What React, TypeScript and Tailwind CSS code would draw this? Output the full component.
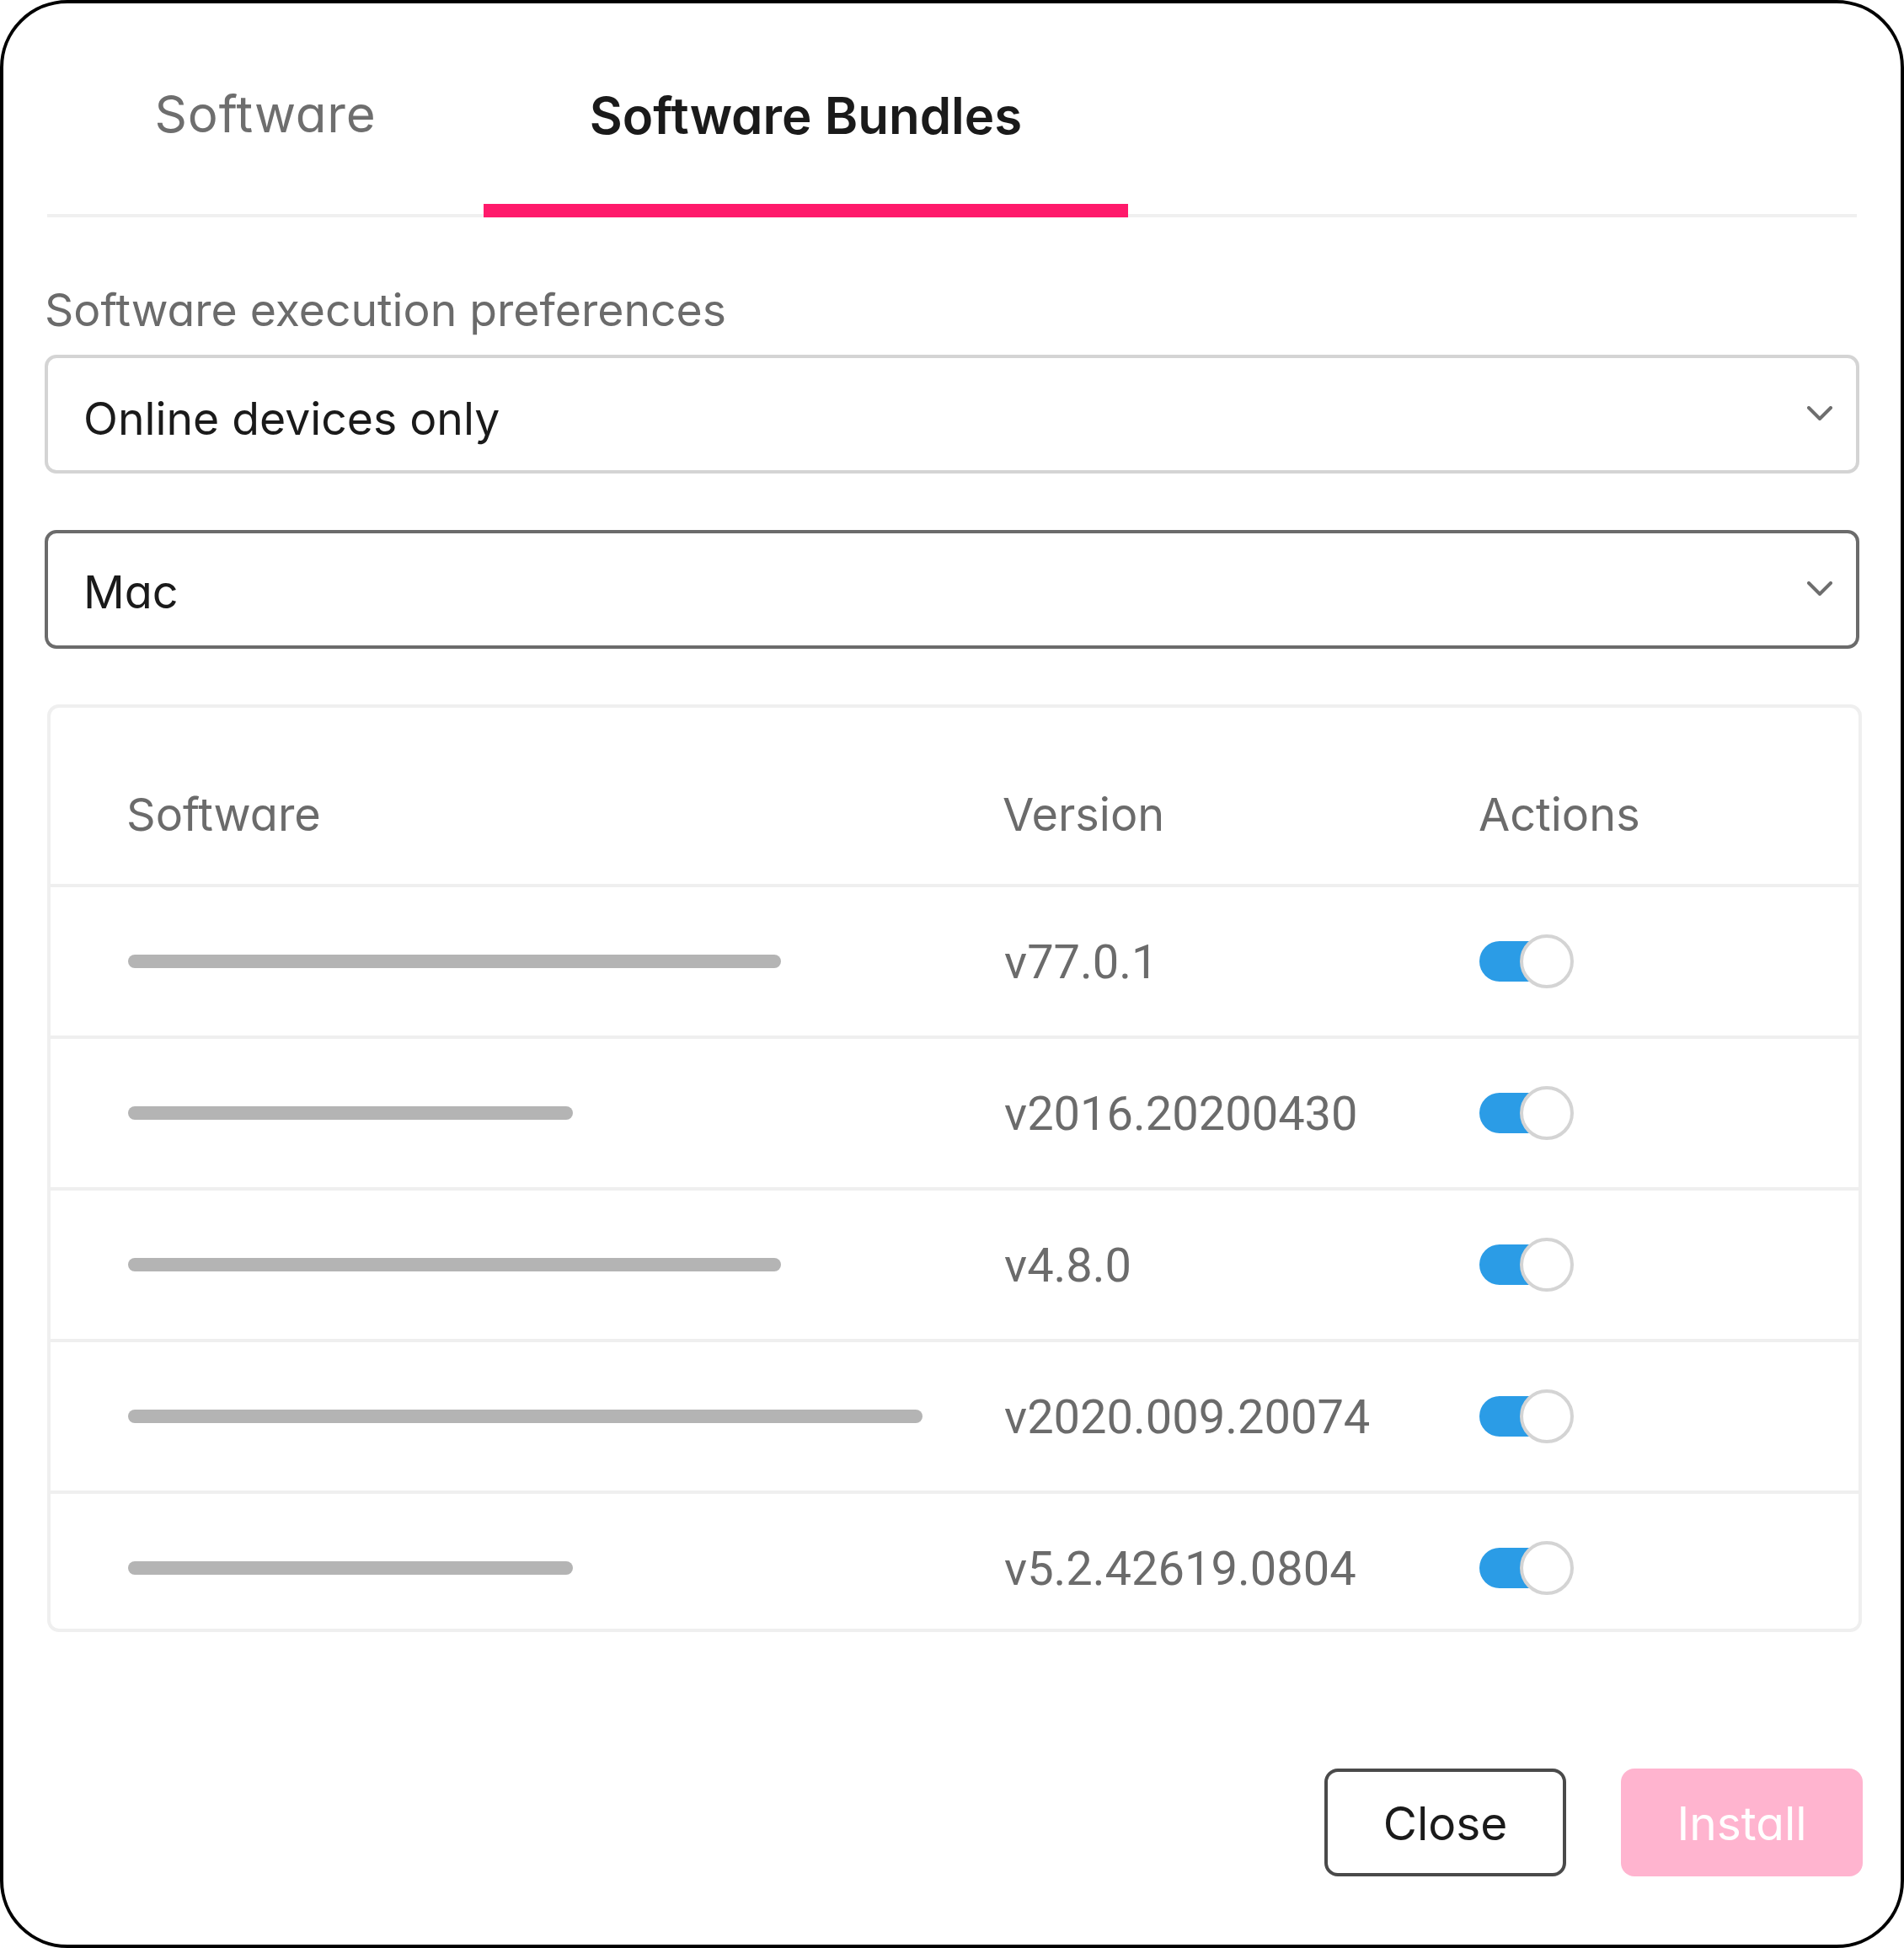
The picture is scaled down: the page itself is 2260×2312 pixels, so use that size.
import React, { useState } from 'react';

type Row = { bar: number; version: string; enabled: boolean };

const rows: Row[] = [
  { bar: 775, version: 'v77.0.1', enabled: true },
  { bar: 528, version: 'v2016.20200430', enabled: true },
  { bar: 775, version: 'v4.8.0', enabled: true },
  { bar: 943, version: 'v2020.009.20074', enabled: true },
  { bar: 528, version: 'v5.2.42619.0804', enabled: true },
];

function Chevron() {
  return (
    <svg width="30" height="18" viewBox="0 0 30 18" fill="none" className="shrink-0">
      <path d="M2 2 L15 15 L28 2" stroke="#6e6e6e" strokeWidth="4" strokeLinecap="round" strokeLinejoin="round" />
    </svg>
  );
}

function Toggle({ on }: { on: boolean }) {
  return (
    <div className="relative w-[112px] h-[64px]">
      <div className={`absolute left-0 top-[8px] w-[90px] h-[48px] rounded-full ${on ? 'bg-[#2b9ce6]' : 'bg-[#d4d4d4]'}`} />
      <div className="absolute right-0 top-0 w-[64px] h-[64px] rounded-full bg-white border-4 border-[#d4d4d4]" />
    </div>
  );
}

export default function App() {
  const [tab, setTab] = useState<'software' | 'bundles'>('bundles');

  return (
    <div className="w-[2260px] h-[2312px] bg-white border-4 border-black rounded-[80px] px-[49px] font-['Inter',sans-serif] [font-feature-settings:'cv11']">
      {/* tabs */}
      <div className="flex mx-[3px] border-b-4 border-[#f0f0f0]">
        <button
          onClick={() => setTab('software')}
          className={`w-[518px] h-[254px] -mb-[4px] border-b-[16px] pt-[101px] text-[60px] leading-none text-center ${tab === 'software' ? 'border-[#ff1a6b] text-[#1a1a1a] font-semibold' : 'border-transparent text-[#6e6e6e] tracking-[0.8px]'}`}
        >
          <div className="h-[137px]">Software</div>
        </button>
        <button
          onClick={() => setTab('bundles')}
          className={`w-[765px] h-[254px] -mb-[4px] border-b-[16px] pt-[103px] text-[60px] leading-none text-center ${tab === 'bundles' ? 'border-[#ff1a6b] text-[#1a1a1a] font-semibold' : 'border-transparent text-[#6e6e6e] tracking-[0.8px]'}`}
        >
          <div className="h-[135px]">Software Bundles</div>
        </button>
      </div>

      <div className="mt-[83px] text-[53.5px] leading-none text-[#6b6b6b]">Software execution preferences</div>

      <div className="mt-[26px] h-[141px] border-4 border-[#d4d4d4] rounded-[14px] flex items-center justify-between pl-[42px] pr-[28px]">
        <span className="pt-[11px] text-[53.5px] leading-none text-[#1a1a1a]">Online devices only</span>
        <Chevron />
      </div>

      <div className="mt-[67px] h-[141px] border-4 border-[#6b6b6b] rounded-[14px] flex items-center justify-between pl-[42px] pr-[28px]">
        <span className="pt-[7px] text-[54px] leading-none text-[#1a1a1a]">Mac</span>
        <Chevron />
      </div>

      {/* table */}
      <div className="mt-[66px] ml-[3px] w-[2154px] h-[1101px] overflow-hidden border-4 border-[#efefef] rounded-[14px]">
        <div className="h-[209px] flex pl-[90px] pt-[100px] text-[54px] leading-none text-[#6b6b6b]">
          <div className="w-[1040px]">Software</div>
          <div className="w-[565px]">Version</div>
          <div>Actions</div>
        </div>
        {rows.map((r, i) => (
          <div key={i} className="h-[180px] shrink-0 border-t-4 border-[#efefef] flex items-center pl-[92px]">
            <div className="w-[1040px]">
              <div className="h-[16px] rounded-full bg-[#b4b4b4]" style={{ width: r.bar }} />
            </div>
            <div className="w-[564px] font-['Roboto',sans-serif] text-[56px] leading-none text-[#6b6b6b] pt-[3px]">{r.version}</div>
            <Toggle on={r.enabled} />
          </div>
        ))}
      </div>

      <div className="mt-[162px] -mr-[4px] flex justify-end gap-[65px]">
        <button className="w-[287px] h-[128px] border-4 border-[#4a4a4a] rounded-[16px] text-[55px] leading-none text-[#1a1a1a] pt-[4px]">
          Close
        </button>
        <button className="w-[287px] h-[128px] rounded-[16px] bg-[#ffb4cf] text-[55px] leading-none text-white pt-[4px]">
          Install
        </button>
      </div>
    </div>
  );
}
